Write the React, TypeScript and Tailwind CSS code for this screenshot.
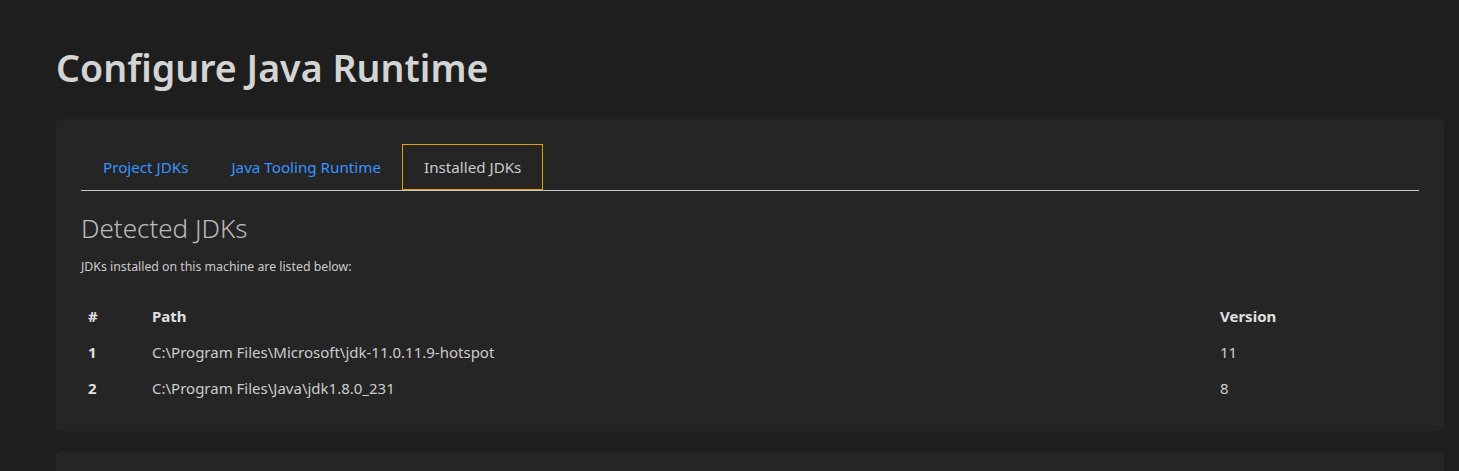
const jdks = [
  { id: 1, path: "C:\\Program Files\\Microsoft\\jdk-11.0.11.9-hotspot", version: "11" },
  { id: 2, path: "C:\\Program Files\\Java\\jdk1.8.0_231", version: "8" },
];

const tabs = ["Project JDKs", "Java Tooling Runtime", "Installed JDKs"];

export default function App() {
  const active = "Installed JDKs";

  return (
    <div className="h-[471px] bg-[#1e1e1e] pl-[56px] pr-[15px] pt-[40px] text-[#cccccc] font-['Noto_Sans','Open_Sans',sans-serif] overflow-hidden">
      <h1 className="text-[37.6px] font-semibold leading-[56px] text-[#d4d4d4] mb-[23px]">
        Configure Java Runtime
      </h1>

      <div className="rounded-[5px] bg-[#252526] px-[25px] pt-[25px] pb-[25px]">
        <div className="flex border-b border-[#c8c8c8]">
          {tabs.map((tab) =>
            tab === active ? (
              <div
                key={tab}
                className="h-[46px] px-[21px] flex items-center text-[15.2px] text-[#cccccc] border border-[#eb9c00] -mb-px"
              >
                {tab}
              </div>
            ) : (
              <div
                key={tab}
                className="h-[46px] pl-[22px] pr-[21px] flex items-center text-[15.2px] text-[#3794ff] cursor-pointer"
              >
                {tab}
              </div>
            )
          )}
        </div>

        <h2 className="mt-[20px] text-[26px] font-light leading-[34px] text-[#bbbbbb]">
          Detected JDKs
        </h2>
        <p className="mt-[13px] text-[12.3px] leading-[18px] text-[#cccccc]">
          JDKs installed on this machine are listed below:
        </p>

        <table className="mt-[22px] w-full text-[15px] text-left">
          <thead>
            <tr className="h-[36px]">
              <th className="w-[64px] px-[7px] font-bold text-[#e0e0e0]">#</th>
              <th className="px-[7px] font-bold text-[#e0e0e0]">Path</th>
              <th className="w-[206px] px-[7px] font-bold text-[#e0e0e0]">Version</th>
            </tr>
          </thead>
          <tbody>
            {jdks.map((jdk) => (
              <tr key={jdk.id} className="h-[36px]">
                <td className="px-[7px] font-bold text-[#e0e0e0]">{jdk.id}</td>
                <td className="px-[7px]">{jdk.path}</td>
                <td className="px-[7px]">{jdk.version}</td>
              </tr>
            ))}
          </tbody>
        </table>
      </div>

      <div className="mt-[20px] h-[60px] rounded-[5px] bg-[#252526]" />
    </div>
  );
}
